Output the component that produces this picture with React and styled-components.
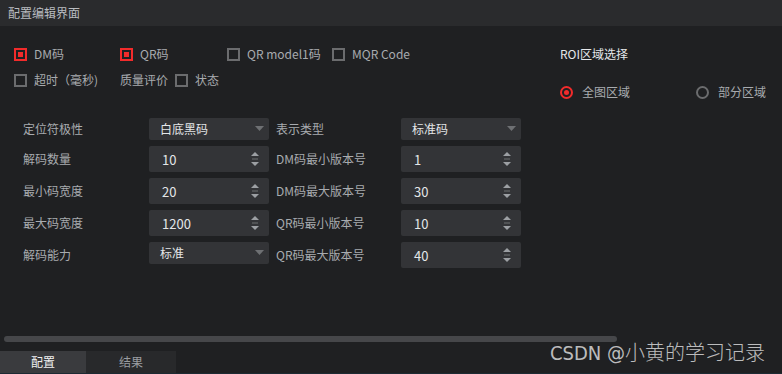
import React from 'react';
import styled, { createGlobalStyle } from 'styled-components';

const GlobalStyle = createGlobalStyle`
  html, body {
    margin: 0;
    padding: 0;
    background: #1f2022;
  }
  body {
    font-family: "Noto Sans CJK SC", "Noto Sans", sans-serif;
    font-size: 12px;
  }
`;

const Page = styled.div`
  position: relative;
  width: 782px;
  height: 374px;
  background: #1f2022;
  display: flex;
  flex-direction: column;
  overflow: hidden;
`;

const Header = styled.div`
  height: 26px;
  background: #2a2b2d;
  color: #b9bcc0;
  display: flex;
  align-items: center;
  padding-left: 8px;
  line-height: 1;
`;

const Body = styled.div`
  flex: 1;
  display: flex;
  flex-direction: column;
`;

const Top = styled.div`
  display: flex;
  padding: 21px 0 0 14px;
  height: 92px;
  box-sizing: border-box;
`;

const Options = styled.div`
  width: 546px;
  display: flex;
  flex-direction: column;
  gap: 12px;
`;

const OptRow = styled.div`
  display: flex;
  align-items: center;
  height: 14px;
`;

const Check = styled.label`
  display: flex;
  align-items: center;
  gap: 7px;
  width: ${p => p.$w}px;
  color: #a8abaf;
  white-space: nowrap;
  line-height: 1;
`;

const Box = styled.span`
  width: 13px;
  height: 13px;
  box-sizing: border-box;
  border: 2px solid ${p => (p.$on ? '#f22b2b' : '#6b6c6e')};
  display: flex;
  align-items: center;
  justify-content: center;
  flex-shrink: 0;
  &::after {
    content: '';
    width: 5px;
    height: 5px;
    background: ${p => (p.$on ? '#f22b2b' : 'transparent')};
  }
`;

const Plain = styled.span`
  width: ${p => p.$w}px;
  color: #a8abaf;
  line-height: 1;
  white-space: nowrap;
`;

const Roi = styled.div`
  display: flex;
  flex-direction: column;
  gap: 24px;
`;

const RoiTitle = styled.div`
  color: #e6e8ea;
  line-height: 14px;
  height: 14px;
`;

const RadioRow = styled.div`
  display: flex;
  align-items: center;
  height: 14px;
`;

const Radio = styled.label`
  display: flex;
  align-items: center;
  gap: 9px;
  width: ${p => p.$w}px;
  color: #a8abaf;
  line-height: 1;
  white-space: nowrap;
`;

const Dot = styled.span`
  width: 13px;
  height: 13px;
  box-sizing: border-box;
  border-radius: 50%;
  border: 2px solid ${p => (p.$on ? '#f22b2b' : '#6b6c6e')};
  display: flex;
  align-items: center;
  justify-content: center;
  &::after {
    content: '';
    width: 5px;
    height: 5px;
    border-radius: 50%;
    background: ${p => (p.$on ? '#f22b2b' : 'transparent')};
  }
`;

const Form = styled.div`
  display: grid;
  grid-template-columns: 126px 120px 7px 125px 120px;
  row-gap: 6px;
  padding: 0 0 0 23px;
  align-items: center;
`;

const Label = styled.div`
  color: #a8abaf;
  line-height: 1;
  white-space: nowrap;
  grid-column: ${p => (p.$second ? 4 : 1)};
`;

const Field = styled.div`
  grid-column: ${p => (p.$second ? 5 : 2)};
  align-self: start;
  height: ${p => (p.$spin ? 26 : 22)}px;
  background: #333437;
  border-radius: 2px;
  display: flex;
  align-items: center;
  justify-content: space-between;
  padding: 0 ${p => (p.$spin ? 9 : 5)}px 0 ${p => (p.$spin ? 13 : 11)}px;
  box-sizing: border-box;
  color: #e4e6e8;
  font-size: ${p => (p.$spin ? 13 : 12)}px;
  line-height: 1;
`;

const Scrollbar = styled.div`
  margin: auto 0 0 4px;
  width: 613px;
  height: 6px;
  border-radius: 3px;
  background: #46474a;
`;

const Tabs = styled.div`
  margin-top: 9px;
  display: flex;
  height: 22px;
  border-bottom: 1px solid #1d2a33;
`;

const Tab = styled.div`
  width: ${p => p.$w}px;
  background: ${p => (p.$active ? '#3a3b3e' : '#28292b')};
  color: ${p => (p.$active ? '#f0f0f0' : '#9a9da1')};
  display: flex;
  align-items: center;
  justify-content: center;
  line-height: 1;
`;

const Watermark = styled.div`
  position: absolute;
  right: 17px;
  top: 341px;
  font-family: "Liberation Sans Narrow", "DejaVu Sans Condensed", "Noto Sans CJK SC", sans-serif;
  font-size: 20px;
  font-weight: 300;
  line-height: 24px;
  color: rgba(225, 225, 225, 0.82);
  white-space: nowrap;
`;

const SelectArrow = () => (
  <svg width="9" height="6" viewBox="0 0 9 6">
    <path d="M0 0 L9 0 L4.5 5 Z" fill="#6e7073" />
  </svg>
);

const SpinArrows = () => (
  <svg width="10" height="16" viewBox="0 0 10 16">
    <path d="M1 5 L5 1 L9 5 Z" fill="#9c9fa3" />
    <rect x="2" y="7.5" width="6" height="1" fill="#6e7073" />
    <path d="M1 11 L9 11 L5 15 Z" fill="#9c9fa3" />
  </svg>
);

const rows = [
  ['定位符极性', { v: '白底黑码' }, '表示类型', { v: '标准码' }],
  ['解码数量', { v: '10', spin: true }, 'DM码最小版本号', { v: '1', spin: true }],
  ['最小码宽度', { v: '20', spin: true }, 'DM码最大版本号', { v: '30', spin: true }],
  ['最大码宽度', { v: '1200', spin: true }, 'QR码最小版本号', { v: '10', spin: true }],
  ['解码能力', { v: '标准' }, 'QR码最大版本号', { v: '40', spin: true }],
];

const Input = ({ v, spin, second }) => (
  <Field $spin={spin} $second={second}>
    <span>{v}</span>
    {spin ? <SpinArrows /> : <SelectArrow />}
  </Field>
);

export default function App() {
  return (
    <Page>
      <GlobalStyle />
      <Header>配置编辑界面</Header>
      <Body>
        <Top>
          <Options>
            <OptRow>
              <Check $w={106}><Box $on />DM码</Check>
              <Check $w={107}><Box $on />QR码</Check>
              <Check $w={105}><Box />QR model1码</Check>
              <Check $w={120}><Box />MQR Code</Check>
            </OptRow>
            <OptRow>
              <Check $w={106}><Box />超时（毫秒)</Check>
              <Plain $w={55}>质量评价</Plain>
              <Check $w={80}><Box />状态</Check>
            </OptRow>
          </Options>
          <Roi>
            <RoiTitle>ROI区域选择</RoiTitle>
            <RadioRow>
              <Radio $w={136}><Dot $on />全图区域</Radio>
              <Radio $w={80}><Dot />部分区域</Radio>
            </RadioRow>
          </Roi>
        </Top>
        <Form>
          {rows.map(([l1, f1, l2, f2]) => (
            <React.Fragment key={l1}>
              <Label>{l1}</Label>
              <Input {...f1} />
              <Label $second>{l2}</Label>
              <Input {...f2} second />
            </React.Fragment>
          ))}
        </Form>
        <Scrollbar />
        <Tabs>
          <Tab $w={86} $active>配置</Tab>
          <Tab $w={90}>结果</Tab>
        </Tabs>
      </Body>
      <Watermark>CSDN @小黄的学习记录</Watermark>
    </Page>
  );
}
